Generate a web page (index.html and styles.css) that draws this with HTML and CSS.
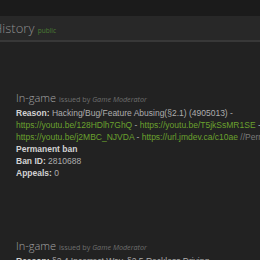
FILE: index.html
```html
<!DOCTYPE html>
<html lang="en">
<head>
  <meta charset="UTF-8">
  <meta name="viewport" content="width=device-width, initial-scale=1.0">
  <title>Ban History</title>
  <link rel="stylesheet" href="styles.css">
</head>
<body>
  <div class="topbar"></div>

  <div class="panel">
    <div class="panel-heading">
      <h2>History <span class="badge">public</span></h2>
    </div>

    <div class="panel-body">
      <!-- Ban entry -->
      <div class="entry">
        <h3>In-game <small>issued by <em>Game Moderator</em></small></h3>
        <p><b>Reason:</b> Hacking/Bug/Feature Abusing(§2.1) (4905013) - <a href="#">https://youtu.be/128HDlh7GhQ</a> - <a href="#">https://youtu.be/T5jkSsMR1SE</a> - <a href="#">https://youtu.be/j2MBC_NJVDA</a> - <a href="#">https://url.jmdev.ca/c10ae</a> <span class="note">//Perm</span></p>
        <p><b>Permanent ban</b></p>
        <p><b>Ban ID:</b> 2810688</p>
        <p><b>Appeals:</b> 0</p>
      </div>

      <div class="entry">
        <h3>In-game <small>issued by <em>Game Moderator</em></small></h3>
        <p><b>Reason:</b> §2.4 Incorrect Way, §2.5 Reckless Driving</p>
      </div>
    </div>
  </div>
</body>
</html>
```

FILE: styles.css
```css
body {
  margin: 0;
  background: #1b1b1b;
  font-family: "Liberation Sans", Arial, sans-serif;
  overflow: hidden;
}
.topbar {
  height: 16px;
  background: #1b1b1b;
}
.panel {
  width: 340px;
  background: #222222;
}
.panel-heading {
  height: 24px;
  background: #282828;
  border-bottom: 2px solid #383838;
  display: flex;
  align-items: center;
}
.panel-heading h2 {
  margin: 0 0 0 -7px;
  font-family: "Open Sans", sans-serif;
  font-weight: 300;
  font-size: 13px;
  color: #8f8f8f;
}
.badge {
  font-size: 6.5px;
  font-weight: 400;
  color: #4c7d34;
}
.panel-body {
  width: 305px;
  padding: 48px 0 0 16px;
}
.entry {
  margin-bottom: 59px;
}
.entry h3 {
  margin: 0;
  font-family: "Open Sans", sans-serif;
  font-weight: 300;
  font-size: 11px;
  line-height: 16px;
  color: #a5a5a5;
}
.entry h3 small {
  font-size: 7.2px;
  font-weight: 400;
  color: #6f6f6f;
}
.entry p {
  margin: 0;
  font-size: 8.5px;
  line-height: 12px;
  color: #adadad;
}
.entry b {
  color: #d2d2d2;
}
.entry a {
  color: #6aa12e;
  text-decoration: none;
}
.note {
  color: #7a7a7a;
}
```
